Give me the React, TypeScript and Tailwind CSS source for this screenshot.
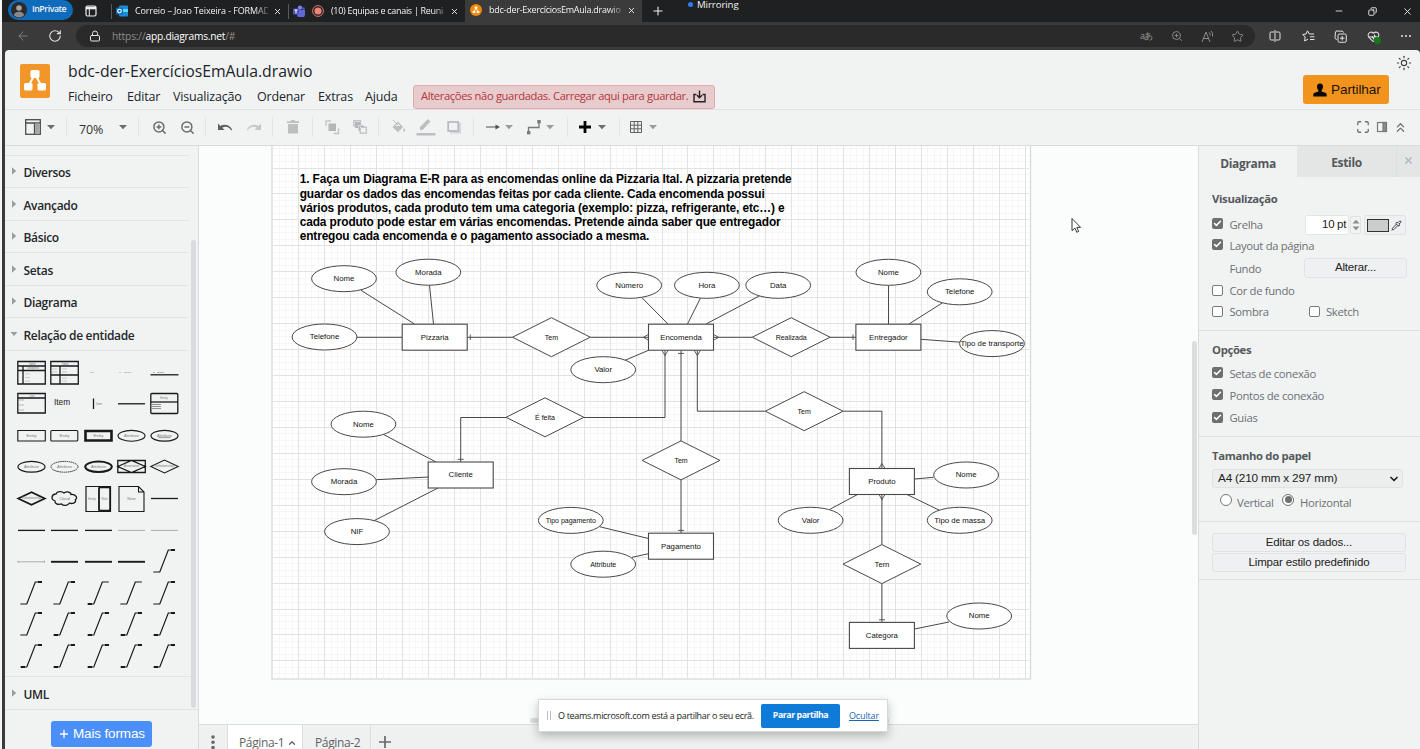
import React from "react";
import {
  X,
  Plus,
  Minus,
  ArrowLeft,
  RotateCw,
  Lock,
  ZoomIn,
  ZoomOut,
  Star,
  Sun,
  Copy,
  ChevronsUp,
  ChevronUp,
  ChevronDown,
  Pipette,
  Maximize,
  HeartPulse,
  Check,
} from "lucide-react";

const UI = "font-['Open_Sans','Noto_Sans',sans-serif]";

/* ---------- browser chrome ---------- */

function OrangeLogo({ className }: { className: string }) {
  return (
    <svg viewBox="0 0 30 34" className={className}>
      <rect width="30" height="34" rx="2" fill="#f2962a" />
      <path d="M15 10 L8.5 22 M15 10 L21.500 22" stroke="#fff" strokeWidth="2" />
      <rect x="10.500" y="6" width="9" height="8" rx="1.500" fill="#fff" />
      <rect x="4" y="19" width="8.500" height="7.500" rx="1.500" fill="#fff" />
      <rect x="17.500" y="19" width="8.500" height="7.500" rx="1.500" fill="#fff" />
    </svg>
  );
}

function TabBar() {
  return (
    <div className="flex h-[22px] items-center bg-[#1f2021] text-[9px] text-[#f2f2f2]">
      <div className="ml-[6px] flex h-[20px] w-[65px] items-center self-start rounded-full bg-[#0f6cbd]">
        <svg viewBox="0 0 16 16" className="ml-[3px] h-4 w-4">
          <circle cx="8" cy="8" r="8" fill="#2c2a2b" />
          <circle cx="8" cy="6" r="2.800" fill="#a8a4a2" />
          <path d="M3 13.500c0-5 10-5 10 0a8 8 0 0 1-10 0z" fill="#8b8886" />
        </svg>
        <span className="ml-[5px] text-[8.800px] font-semibold tracking-[-0.45px] whitespace-nowrap">InPrivate</span>
      </div>
      <svg viewBox="0 0 12 12" className="ml-[12px] h-[12px] w-[12px]" fill="none" stroke="#eee">
        <rect x="1" y="1" width="10" height="10" rx="1.500" strokeWidth="1.200" />
        <path d="M1 3h10" strokeWidth="2.600" />
        <path d="M4.300 4v7" strokeWidth="1" />
      </svg>
      <div className="ml-[14px] h-[15px] w-px bg-[#5a5a5a]" />
      <svg viewBox="0 0 12 12" className="ml-[4px] h-[12px] w-[12px]">
        <rect x="3" y="0.500" width="9" height="11" rx="1" fill="#1c8ad6" />
        <path d="M7 4h5v3H7z" fill="#50d9ff" />
        <rect x="0" y="2.500" width="7" height="7" rx="1" fill="#0f6cbd" />
        <circle cx="3.500" cy="6" r="1.800" fill="none" stroke="#fff" strokeWidth="1.100" />
      </svg>
      <span className="ml-[7px] w-[133px] tracking-[-0.13px] whitespace-nowrap [mask-image:linear-gradient(to_right,#000_90%,transparent_104%)]">
        Correio – Joao Teixeira - FORMAD
      </span>
      <X className="ml-[5px] h-[9px] w-[9px]" strokeWidth={2.4} />
      <div className="ml-[6px] h-[15px] w-px bg-[#5a5a5a]" />
      <svg viewBox="0 0 12 12" className="ml-[4px] h-[12px] w-[12px]">
        <circle cx="7" cy="2.600" r="2.200" fill="#7b83eb" />
        <circle cx="10.500" cy="3.600" r="1.300" fill="#5059c9" />
        <path d="M4 5h8v3.500a3.500 3.500 0 0 1-8 1z" fill="#6068d8" />
        <rect x="0" y="3.500" width="6" height="6" rx="0.800" fill="#4b53bc" />
        <path d="M1.500 5h3M3 5v3.500" stroke="#fff" strokeWidth="1" />
      </svg>
      <svg viewBox="0 0 12 12" className="ml-[7px] h-[12px] w-[12px]">
        <circle cx="6" cy="6" r="5.400" fill="none" stroke="#f0837a" strokeWidth="0.900" />
        <circle cx="6" cy="6" r="3.600" fill="#f0837a" />
      </svg>
      <span className="ml-[7px] w-[114px] tracking-[-0.3px] whitespace-nowrap [mask-image:linear-gradient(to_right,#000_90%,transparent_104%)]">
        (10) Equipas e canais | Reuni
      </span>
      <X className="ml-[5px] h-[9px] w-[9px]" strokeWidth={2.4} />
      <div className="ml-[6px] flex h-[22px] w-[177px] items-center bg-[#3b3b3b] pb-[2px]">
        <svg viewBox="0 0 12 12" className="ml-[5px] h-[12px] w-[12px]">
          <circle cx="6" cy="6" r="6" fill="#f08705" />
          <path d="M6 4 4 8M6 4l2 4" stroke="#fff" strokeWidth="0.800" />
          <path d="M4.700 2.600h2.600v2.200H4.700zM2.700 6.800h2.600V9H2.700zM6.700 6.800h2.600V9H6.700z" fill="#fff" />
        </svg>
        <span className="ml-[7px] w-[133px] tracking-[-0.26px] whitespace-nowrap [mask-image:linear-gradient(to_right,#000_90%,transparent_104%)]">
          bdc-der-ExercíciosEmAula.drawio
        </span>
        <X className="ml-[5px] h-[9px] w-[9px]" strokeWidth={2.4} />
      </div>
      <Plus className="ml-[9px] h-[14px] w-[14px]" strokeWidth={1.8} />
      <div className="ml-[23px] flex h-[22px] items-start">
        <span className="mt-[1.500px] h-[5px] w-[5px] rounded-full bg-[#2f7bff]" />
        <span className="ml-[4px] text-[9.700px] leading-[9px] tracking-[-0.1px] whitespace-nowrap">Mirroring</span>
      </div>
      <Minus className="ml-auto h-[10px] w-[10px]" strokeWidth={2} />
      <Copy className="ml-[24px] h-[9px] w-[9px] -scale-x-100" strokeWidth={2.4} />
      <X className="mr-[7px] ml-[25px] h-[11px] w-[11px]" strokeWidth={2} />
    </div>
  );
}

function AddressBar() {
  return (
    <div className="flex h-[28px] items-center bg-[#3a3a3a] text-[#e4e4e4]">
      <ArrowLeft className="ml-[14px] h-[14px] w-[14px] text-[#7d7d7d]" strokeWidth={1.7} />
      <RotateCw className="ml-[18px] h-[14px] w-[14px]" strokeWidth={1.9} />
      <div className="ml-[14px] flex h-[22px] w-[1179px] items-center rounded-full bg-[#2a2a2a] text-[#8e8e8e]">
        <Lock className="ml-[13px] h-[12px] w-[12px] text-[#e4e4e4]" strokeWidth={2} />
        <div className="mt-[1px] ml-[11px] text-[10.200px] whitespace-nowrap">
          <span className="tracking-[-0.15px]">https://</span>
          <span className="tracking-[-0.22px] text-white">app.diagrams.net</span>
          <span className="tracking-[-0.3px]">/#</span>
        </div>
        <span className="ml-auto text-[9px] tracking-[-0.5px] text-[#999]">aあ</span>
        <ZoomIn className="ml-[18px] h-[12px] w-[12px]" strokeWidth={1.8} />
        <svg viewBox="0 0 13 13" className="ml-[18px] h-[13px] w-[13px]" fill="none" stroke="#8e8e8e">
          <path d="M1 12 5 2l4 10M2.500 8.500h5M8 2.500q1.600 1.200 1 3M10 1q2.500 2 1.500 5.500" />
        </svg>
        <Star className="mr-[11px] ml-[17px] h-[13px] w-[13px]" strokeWidth={1.7} />
      </div>
      <svg viewBox="0 0 12 12" className="ml-[14px] h-[12px] w-[12px]" fill="none" stroke="#e4e4e4">
        <path d="M5 2H2.200a1.200 1.200 0 0 0-1.200 1.200v5.600A1.200 1.200 0 0 0 2.200 10H5M7 2h2.800A1.200 1.200 0 0 1 11 3.200v5.600A1.200 1.200 0 0 1 9.800 10H7M6 0v12" />
      </svg>
      <svg viewBox="0 0 13 12" className="ml-[21px] h-[12px] w-[13px]" fill="none" stroke="#e4e4e4" strokeLinejoin="round">
        <path d="M12 4H7.300L5.500 0.800 4 4 0.800 4.500 3.200 7l-.6 4L6 9.200M8 6.800h4.500M8 9.500h4.500" />
      </svg>
      <svg viewBox="0 0 13 13" className="ml-[19px] h-[13px] w-[13px]" fill="none" stroke="#e4e4e4">
        <rect x="4" y="4" width="8.300" height="8.300" rx="1.500" />
        <path d="M8.200 6v4.400M6 8.200h4.400M2.800 9.500A2 2 0 0 1 1 7.500L1.500 2A1.500 1.500 0 0 1 3 1l5 .2a1.500 1.500 0 0 1 1.500 1.300" />
      </svg>
      <div className="relative ml-[20px] h-[13px] w-[13px]">
        <HeartPulse className="h-[13px] w-[13px]" strokeWidth={1.9} />
        <span className="absolute right-[-1px] bottom-[-1px] h-[7px] w-[7px] rounded-full bg-[#16761a]" />
      </div>
      <svg viewBox="0 0 12 4" className="ml-[20px] h-[4px] w-[12px]" fill="#e4e4e4">
        <circle cx="2" cy="2" r="1" />
        <circle cx="6" cy="2" r="1" />
        <circle cx="10" cy="2" r="1" />
      </svg>
    </div>
  );
}

/* ---------- editor header ---------- */

function Header() {
  return (
    <div className="flex h-[60px] border-b border-[#dfe1e2]">
      <OrangeLogo className="mt-[13.500px] ml-[14.500px] h-[34px] w-[30px]" />
      <div className="ml-[18.500px] text-[#20242a]">
        <div className="mt-[10px] text-[15.800px] leading-[22px] tracking-[-0.02px] whitespace-nowrap">
          bdc-der-ExercíciosEmAula.drawio
        </div>
        <div className="mt-[2px] flex h-[25px] items-center text-[12.500px] tracking-[-0.17px] whitespace-nowrap">
          <span className="mt-[2px] w-[59px]">Ficheiro</span>
          <span className="mt-[2px] w-[46px]">Editar</span>
          <span className="mt-[2px] w-[84px]">Visualização</span>
          <span className="mt-[2px] w-[61px]">Ordenar</span>
          <span className="mt-[2px] w-[47px]">Extras</span>
          <span className="mt-[2px] w-[48px]">Ajuda</span>
          <div className="flex h-[24px] w-[302px] items-center rounded-[3px] border border-[#e0a9ad] bg-[#e8cbcc] pl-[7px] text-[11.200px] tracking-[-0.36px] text-[#b3363c]">
            <span className="w-[272px]">Alterações não guardadas. Carregar aqui para guardar.</span>
            <svg viewBox="0 0 13 13" className="h-[13px] w-[13px]" fill="none" stroke="#222" strokeWidth="1.400">
              <path d="M6.500 0.500v7M4 5.200l2.500 2.600L9 5.200M3.500 4.500H1v7.300h11V4.500H9.500" />
            </svg>
          </div>
        </div>
      </div>
      <div className="mt-[25px] mr-[7px] ml-auto flex h-[29px] w-[86px] items-center rounded-[3px] bg-[#f2931e] font-['Liberation_Sans',Arial,sans-serif] text-[13.600px] text-[#1c1408]">
        <svg viewBox="0 0 14 14" className="ml-[10px] h-[14px] w-[14px]" fill="#0a0805">
          <path d="M7 0.500c2.200 0 3 1.600 3 3.300 0 1.500-.6 2.700-1.300 3.300v1.300l3.600 1.400c1 .4 1.400 1 1.400 2V13.500H.3v-1.700c0-1 .4-1.600 1.400-2l3.600-1.400V7.100C4.600 6.500 4 5.300 4 3.800 4 2.100 4.800.5 7 .5z" />
        </svg>
        <span className="mt-[1px] ml-[4px] tracking-[-0.1px]">Partilhar</span>
      </div>
      <Sun className="mt-[5px] mr-[8px] h-[16px] w-[16px] text-[#444]" strokeWidth={1.7} />
    </div>
  );
}

function Caret({ className }: { className: string }) {
  return (
    <svg viewBox="0 0 16 16" className={"h-4 w-4 shrink-0 " + className}>
      <path d="M4 6h8l-4 4.200z" fill="currentColor" />
    </svg>
  );
}

function Sep({ className }: { className: string }) {
  return <div className={"h-[20px] w-px shrink-0 bg-[#e2e4e5] " + className} />;
}

function Toolbar() {
  return (
    <div className="flex h-[36px] items-center border-b border-[#d9dbdc] pb-[1px] text-[#6b6e70]">
      <svg viewBox="0 0 16 16" className="ml-[20px] h-4 w-4" fill="none" stroke="#4b4d4f" strokeWidth="1.300">
        <rect x="0.700" y="0.700" width="14.600" height="14.600" />
        <path d="M0.700 4h14.600M9.500 4v11" />
        <rect x="10" y="4.500" width="4.700" height="10" fill="#a3a6a8" stroke="none" />
      </svg>
      <Caret className="ml-[2px]" />
      <Sep className="ml-[7px]" />
      <span className="mt-[6px] ml-[12px] w-[36px] text-[12.500px] tracking-[-0.2px] text-[#333]">70%</span>
      <Caret className="" />
      <Sep className="ml-[7px]" />
      <ZoomIn className="ml-[13px] h-[15px] w-[15px]" strokeWidth={2.4} />
      <ZoomOut className="ml-[13px] h-[15px] w-[15px]" strokeWidth={2.4} />
      <Sep className="ml-[10px]" />
      <svg viewBox="0 0 16 16" className="ml-[11px] h-4 w-4" fill="#5c5f61">
        <path d="M1 4.500v6.500h6.500L5.300 8.800C8 7 12 7.200 14.200 11.500l1-.7C12.800 5.500 7.500 4.500 3.300 6.900z" />
      </svg>
      <svg viewBox="0 0 16 16" className="ml-[13px] h-4 w-4 -scale-x-100" fill="#c5c8ca">
        <path d="M1 4.500v6.500h6.500L5.300 8.800C8 7 12 7.200 14.200 11.500l1-.7C12.800 5.500 7.500 4.500 3.300 6.900z" />
      </svg>
      <Sep className="ml-[10px]" />
      <svg viewBox="0 0 16 16" className="ml-[12px] h-4 w-4" fill="#bcbfc1">
        <path d="M2 2.300h3.500L6.500 1h3l1 1.300H14V4H2zM3 5h10v9.500H3z" />
      </svg>
      <Sep className="ml-[11px]" />
      <svg viewBox="0 0 16 16" className="ml-[11px] h-4 w-4" fill="#b4b7b9">
        <path d="M4.500 4.500h7.500v7.500H4.500z" />
        <path d="M2 7V2h5M14.500 9.500v5h-5" fill="none" stroke="#c3c6c8" strokeWidth="1.500" />
      </svg>
      <svg viewBox="0 0 16 16" className="ml-[12px] h-4 w-4" fill="#b4b7b9">
        <path d="M3 3h6v3H6v3H3z" />
        <path d="M4 7H1.800V1.800H8.500V4M9 8.200h5.300v6H8.200V9" fill="none" stroke="#c3c6c8" strokeWidth="1.500" />
        <path d="M6.500 6.500H12V8H8v4H6.500z" />
      </svg>
      <Sep className="ml-[10px]" />
      <svg viewBox="0 0 16 16" className="ml-[11px] h-4 w-4" fill="#bcbfc1">
        <path d="M2.500 8 8 2.500l5 5.500-5 5.300z" />
        <path d="M3 1l5 5M4 7.500 8 3.700l3.500 3.800z" stroke="#bcbfc1" fill="#eef0f0" />
        <path d="M14 9c1.300 1.900 1.700 3.300.2 3.600-1.600-.2-1.200-1.800-.2-3.600z" />
      </svg>
      <svg viewBox="0 0 20 18" className="ml-[10px] h-[18px] w-[20px]" fill="#bcbfc1">
        <path d="M4 12V9l8-8 2.500 2.500-7.700 8.300zM0.500 15h19v2.500H.5z" />
      </svg>
      <svg viewBox="0 0 16 16" className="ml-[10px] h-4 w-4" fill="none">
        <rect x="4" y="4" width="11" height="10.500" fill="#d4d6d7" />
        <rect x="2.200" y="3" width="10" height="9" fill="#f1f3f3" stroke="#b9bcbe" strokeWidth="1.800" />
      </svg>
      <Sep className="ml-[11px]" />
      <svg viewBox="0 0 16 16" className="ml-[11px] h-4 w-4">
        <path d="M1 8h10" stroke="#4e5052" strokeWidth="1.200" />
        <path d="M10.500 5.500 15 8l-4.500 2.500z" fill="#4e5052" />
      </svg>
      <Caret className="text-[#9a9da0]" />
      <svg viewBox="0 0 16 16" className="ml-[9px] h-4 w-4" fill="#777a7c">
        <path d="M2.500 13.500V8.500h10.500V3" fill="none" stroke="#777a7c" strokeWidth="1.300" />
        <rect x="1" y="12" width="3.400" height="3.400" />
        <rect x="11.300" y="1" width="3.400" height="3.400" />
      </svg>
      <Caret className="text-[#9a9da0]" />
      <Sep className="ml-[9px]" />
      <svg viewBox="0 0 16 16" className="ml-[9px] h-4 w-4">
        <path d="M8 2v12M2 8h12" stroke="#000" strokeWidth="2.800" />
      </svg>
      <Caret className="ml-[1px]" />
      <Sep className="ml-[9px]" />
      <svg viewBox="0 0 16 16" className="ml-[8px] h-4 w-4" fill="none" stroke="#5f6264">
        <path d="M2.500 2.500h11v11h-11zM6.200 2.500v11M9.800 2.500v11M2.500 6.200h11M2.500 9.800h11" />
      </svg>
      <Caret className="ml-[1px] text-[#9a9da0]" />
      <Maximize className="ml-auto h-[14px] w-[14px]" strokeWidth={2.2} />
      <svg viewBox="0 0 12 12" className="ml-[6px] h-[12px] w-[12px]" fill="none" stroke="#77797b" strokeWidth="1.200">
        <rect x="1.500" y="1.500" width="9" height="9" />
        <rect x="7" y="1.500" width="3" height="9" fill="#8a8d8f" />
      </svg>
      <ChevronsUp className="mr-[12px] ml-[5px] h-[15px] w-[15px]" strokeWidth={2} />
    </div>
  );
}

/* ---------- shapes sidebar ---------- */

function SidebarRow({ label, open }: { label: string; open?: boolean }) {
  return (
    <div className="flex h-[32.5px] shrink-0 items-center border-b border-[#e1e4e4] pt-[4px] text-[12px] font-semibold tracking-[-0.33px] text-[#23262a]">
      <svg viewBox="0 0 8 8" className="mb-[4px] ml-[5px] h-[8px] w-[8px]" fill="#9a9d9e">
        {open ? <path d="M0.500 2h7L4 6z" /> : <path d="M2 0.300v7.400L6.200 4z" />}
      </svg>
      <span className="ml-[5.500px] whitespace-nowrap">{label}</span>
    </div>
  );
}

function Tiny({ x, y, children, size = 3 }: { x: number; y: number; children: string; size?: number }) {
  return (
    <text x={x} y={y} fontSize={size} fill="#777" stroke="none" textAnchor="middle" fontFamily="Liberation Sans, sans-serif">
      {children}
    </text>
  );
}

const S = "#17191a";
const connector = (a: boolean, b: boolean) => (
  <g>
    <path d="M5.300 27h6.500l8.500-22h6.500" stroke={S} strokeWidth="1.200" />
    {a && <path d="M6 27h4" stroke={S} strokeWidth="2" />}
    {b && <path d="M23 5h4" stroke={S} strokeWidth="2" />}
  </g>
);

const palette: React.ReactNode[] = [
  <g>
    <path d="M2.800 4.500h27.500v22.500H2.800zM2.800 9h27.500M2.800 13.500h27.500M8 9v18" />
    <Tiny x={17} y={8}>Table</Tiny>
    <Tiny x={18} y={12.5}>uniqueId</Tiny>
    <path d="M10 17h5M10 20.500h5M10 24h5" stroke="#aaa" strokeWidth="0.600" />
  </g>,
  <g>
    <path d="M2.800 4.500h27.500v22.500H2.800zM2.800 9h27.500M2.800 18h27.500M12 9v18" />
    <Tiny x={17} y={8}>Table</Tiny>
    <path d="M4 12h5M4 15h5M14 12h5M14 15h5M14 21h5M14 24h5" stroke="#aaa" strokeWidth="0.600" />
  </g>,
  <path d="M8 15.500h4" stroke="#b5b5b5" strokeWidth="0.700" />,
  <path d="M4 15.500h2M9 15.500h7" stroke="#b5b5b5" strokeWidth="0.700" />,
  <g>
    <path d="M5 15.500h2M9 15.500h7" stroke="#999" strokeWidth="0.700" />
    <path d="M2.500 17.800h28" />
  </g>,
  <g>
    <path d="M2.800 5.500h27.500v19.500H2.800zM2.800 10h27.500" />
    <Tiny x={17} y={9}>List</Tiny>
    <path d="M4 12h5M4 17h5M4 22h5" stroke="#999" strokeWidth="0.700" />
  </g>,
  <text x="6" y="17" fontSize="8.300" fill="#222" stroke="none" fontFamily="Liberation Sans, sans-serif">Item</text>,
  <g>
    <path d="M11.500 10.500v10.500" />
    <Tiny x={17} y={17}>Item</Tiny>
  </g>,
  <path d="M3 15.800h27" />,
  <g>
    <rect x="2.800" y="5.500" width="27" height="20" rx="1" />
    <path d="M2.800 14h27" />
    <Tiny x={16} y={11}>Entity</Tiny>
    <path d="M4 16.500h9M4 18.500h9M4 20.500h9" stroke="#777" strokeWidth="0.800" />
  </g>,
  <g><path d="M2.800 10.500h27.500v10.500H2.800z" strokeWidth="1.100" /><Tiny x={16.5} y={17} size={4}>Entity</Tiny></g>,
  <g><rect x="2.800" y="10.500" width="27" height="10.500" rx="1" strokeWidth="1.100" /><Tiny x={16.5} y={17} size={4}>Entity</Tiny></g>,
  <g><path d="M3.500 11h26v9.500h-26z" strokeWidth="2.600" /><Tiny x={16.5} y={17} size={4}>Entity</Tiny></g>,
  <g><ellipse cx="16.500" cy="15.800" rx="13.500" ry="5.400" strokeWidth="1.100" /><Tiny x={16.5} y={17} size={4}>Attribute</Tiny></g>,
  <g><ellipse cx="16.500" cy="15.800" rx="13.500" ry="5.400" strokeWidth="1.200" /><Tiny x={16.5} y={17} size={4}>Attribute</Tiny><path d="M10.500 17.600h12" strokeWidth="0.400" /></g>,
  <g><ellipse cx="16.500" cy="15.800" rx="13.500" ry="5.400" strokeWidth="1.200" /><Tiny x={16.5} y={17} size={4}>Attribute</Tiny></g>,
  <g><ellipse cx="16.500" cy="15.800" rx="13.500" ry="5.400" strokeWidth="0.900" strokeDasharray="1.500 0.600" /><Tiny x={16.5} y={17} size={4}>Attribute</Tiny></g>,
  <g><ellipse cx="16.500" cy="15.800" rx="13.300" ry="5.200" strokeWidth="2" /><Tiny x={16.5} y={17} size={4}>Attribute</Tiny></g>,
  <g><path d="M2.800 9.500h27.500v12H2.800zM2.800 15.500l13.700-6 13.700 6-13.700 6z" /><Tiny x={16.5} y={16.500} size={3}>Associative</Tiny></g>,
  <g><path d="M2.800 15.500l13.700-6.500 13.700 6.500-13.700 6.500z" strokeWidth="1.100" /><Tiny x={16.5} y={16.500} size={3.5}>Relationship</Tiny></g>,
  <g><path d="M3.200 15.500l13.300-6.200 13.300 6.200-13.300 6.200z" strokeWidth="1.700" /><Tiny x={16.5} y={16.500} size={3.5}>Relationship</Tiny></g>,
  <g><path d="M8 11c1-3 6-3 8-1 3-2 7-1 7 1.500 5-.5 7 4 4.500 5 1 4-4 4.500-6 3.500-2 3-6 3-8 1-4 1-7-.5-6.500-3C2 16 4 11 8 11z" strokeWidth="1.300" /><Tiny x={16.5} y={17} size={4}>Cloud</Tiny></g>,
  <g><path d="M4 3.500h24.500v25H4zM17 3.500v25" strokeWidth="1.200" /><rect x="17" y="4.500" width="11" height="23" rx="1.500" strokeWidth="1.500" /><Tiny x={10} y={17} size={3}>Entity</Tiny><Tiny x={22.500} y={17} size={3}>Role</Tiny></g>,
  <g><path d="M4 3.500h19.500l5.500 5.500v19.500H4zM23.500 3.500V9H29" strokeWidth="1.100" /><Tiny x={16.5} y={17} size={4}>Note</Tiny></g>,
  <path d="M3 15.500h27" />,
  <path d="M3 16.400h27" />,
  <path d="M3 16.400h27" />,
  <path d="M3 16.400h27" />,
  <path d="M3 16.400h27" stroke="#a3a5a6" strokeWidth="0.900" />,
  <path d="M3 16.400h27" stroke="#a3a5a6" strokeWidth="0.900" />,
  <g stroke="#a3a5a6" strokeWidth="0.900"><path d="M3 16.800h27" /><path d="M3 15.800v2M29.500 15.800v2" /></g>,
  <path d="M3 16.800h27" strokeWidth="1.900" />,
  <path d="M3 16.800h27" strokeWidth="1.900" />,
  <path d="M3 16.800h27" strokeWidth="1.900" />,
  connector(false, true),
  connector(false, true), connector(false, true), connector(true, false), connector(false, false), connector(false, true),
  connector(false, true), connector(true, true), connector(true, true), connector(true, true), connector(true, true),
  connector(true, true), connector(true, true), connector(true, true), connector(true, true), connector(true, true),
];

function Sidebar() {
  return (
    <div className="relative flex w-[194px] flex-col border-r border-[#d9dcdc] bg-[#f1f3f3]">
      <div className="w-[184px]">
        <div className="h-[9.5px] border-b border-[#e1e4e4]" />
        {["Diversos", "Avançado", "Básico", "Setas", "Diagrama"].map((l) => (
          <SidebarRow key={l} label={l} />
        ))}
        <SidebarRow label="Relação de entidade" open />
      </div>
      <div className="grid h-[326.500px] w-[186px] shrink-0 grid-cols-[repeat(5,33.300px)] content-start border-b border-[#e1e4e4] pt-[6.500px] pl-[10px]">
        {palette.map((p, i) => (
          <svg key={i} viewBox="0 0 33.300 31.400" className="h-[31.400px] w-[33.300px]" fill="none" stroke={S} strokeWidth="1.300">
            {p}
          </svg>
        ))}
      </div>
      <SidebarRow label="UML" />
      <div className="mt-[11.500px] ml-[46px] flex h-[26px] w-[101px] shrink-0 items-center rounded-[3px] bg-[#4b8ff8] pl-[7px] font-['Liberation_Sans',Arial,sans-serif] text-[13.500px] tracking-[-0.15px] text-white">
        <Plus className="mr-[3px] h-[12px] w-[12px]" strokeWidth={2.6} />
        <span className="whitespace-nowrap">Mais formas</span>
      </div>
      <div className="absolute top-[94px] left-[186px] h-[468px] w-[5px] rounded-full bg-[#d9dcdc]" />
    </div>
  );
}

/* ---------- diagram ---------- */

type Node = { k: "e" | "r" | "d"; x: number; y: number; t: string; s?: number };

const nodes: Node[] = [
  { k: "e", x: 344, y: 278.7, t: "Nome" },
  { k: "e", x: 428.3, y: 272.2, t: "Morada" },
  { k: "e", x: 324.5, y: 337, t: "Telefone" },
  { k: "r", x: 434.7, y: 337.2, t: "Pizzaria" },
  { k: "d", x: 551.4, y: 337.2, t: "Tem", s: 7 },
  { k: "e", x: 629.2, y: 285.3, t: "Número" },
  { k: "e", x: 706.9, y: 285.3, t: "Hora" },
  { k: "e", x: 778.2, y: 285.3, t: "Data" },
  { k: "r", x: 681, y: 337.2, t: "Encomenda" },
  { k: "e", x: 603.2, y: 369.7, t: "Valor" },
  { k: "d", x: 791.2, y: 337.2, t: "Realizada", s: 7 },
  { k: "e", x: 888.4, y: 272.3, t: "Nome" },
  { k: "e", x: 959.7, y: 291.8, t: "Telefone" },
  { k: "r", x: 888.4, y: 337.2, t: "Entregador" },
  { k: "e", x: 992, y: 343.6, t: "Tipo de transporte" },
  { k: "d", x: 545, y: 417.3, t: "É feita", s: 7 },
  { k: "d", x: 804.2, y: 411.2, t: "Tem", s: 7 },
  { k: "e", x: 363.4, y: 424.2, t: "Nome" },
  { k: "r", x: 460.7, y: 475, t: "Cliente" },
  { k: "e", x: 344, y: 481.7, t: "Morada" },
  { k: "e", x: 357, y: 531.6, t: "NIF" },
  { k: "d", x: 681, y: 460.4, t: "Tem", s: 7 },
  { k: "r", x: 681, y: 546.2, t: "Pagamento" },
  { k: "e", x: 570.8, y: 520.4, t: "Tipo pagamento", s: 7 },
  { k: "e", x: 603.2, y: 564.2, t: "Attribute", s: 7 },
  { k: "r", x: 881.9, y: 481.5, t: "Produto" },
  { k: "e", x: 966.1, y: 475, t: "Nome" },
  { k: "e", x: 810.6, y: 520.3, t: "Valor" },
  { k: "e", x: 959.7, y: 520.3, t: "Tipo de massa" },
  { k: "d", x: 881.9, y: 564.1, t: "Tem" },
  { k: "r", x: 881.9, y: 635.4, t: "Categora" },
  { k: "e", x: 979.2, y: 616, t: "Nome" },
];

const links = [
  "M361 290.300 414.500 324M429.500 285.200 433.500 324M357 337.300H402",
  "M467.300 337.300H512.500M590.300 337.300H648.500M713.500 337.300H752.300M830 337.300H856",
  "M641.500 297.300 668 324M700.500 298 687.500 324M759.500 295.800 706 324M625 360.300 648.500 350.300",
  "M888.500 285.300V324M942.500 302.800 909 324M921 339.300 960 342.200",
  "M460.700 462V417.500H506.200M583.800 417.500H665V350.500M681 350.500V441M681 480V533",
  "M697.300 350.500V411.200H765.300M843.200 411.200H881.900V468.500",
  "M383.500 434.500 436 462M376.300 479.700 428.500 477M374 520.700 438 488",
  "M599.500 526.700 648.500 538.500M632 557.300 648.500 553.700",
  "M914.500 479 933.500 477.300M907 494.500 939.500 510.300M857.500 494.500 829.500 509.500",
  "M881.900 494.500V544.500M881.900 583.700V622.500M914.500 629 949 622",
];

const marks = [
  "M470.300 334.500v5.500M853 334.500v5.500M678 353.400h6M678 530.400h6M457.700 459.300h6M879 619.800h6",
  "M648.500 334.300 643.500 337.300 648.500 340.300M713.500 334.300 718.500 337.300 713.500 340.300",
  "M662 350.500 665 355.500 668 350.500M694.300 350.500 697.300 355.500 700.300 350.500",
  "M879 468.500 881.900 463.500 885 468.500M879 494.500 881.900 499.500 885 494.500",
];

const statement: [string, number][] = [
  ["1. Faça um Diagrama E-R para as encomendas online da Pizzaria Ital. A pizzaria pretende", 492],
  ["guardar os dados das encomendas feitas por cada cliente. Cada encomenda possui", 465],
  ["vários produtos, cada produto tem uma categoria (exemplo: pizza, refrigerante, etc…) e", 485],
  ["cada produto pode estar em várias encomendas. Pretende ainda saber que entregador", 481],
  ["entregou cada encomenda e o pagamento associado a mesma.", 349.5],
];

const PAGE = { left: 272.4, top: 142.6, right: 1029, bottom: 678, cell: 25.94 };

function gridPath(major: boolean) {
  const step = PAGE.cell / 4;
  let d = "";
  for (let i = 1; PAGE.left + i * step < PAGE.right; i++) {
    if ((i % 4 === 0) === major) d += `M${Math.round(PAGE.left + i * step) + 0.5} 146V${PAGE.bottom}`;
  }
  for (let i = 1; PAGE.top + i * step < PAGE.bottom; i++) {
    if ((i % 4 === 0) === major) d += `M273 ${Math.round(PAGE.top + i * step) - 0.5}H${PAGE.right}`;
  }
  return d;
}

function Diagram() {
  return (
    <svg viewBox="199 146 993 570" className="h-[570px] w-[993px] shrink-0" fontFamily="Liberation Sans, Arial, sans-serif">
      <rect x="272" y="140" width="758.500" height="539" fill="#fff" stroke="#d8dada" strokeWidth="1.300" />
      <path d={gridPath(false)} stroke="#f5f6f6" strokeWidth="1" />
      <path d={gridPath(true)} stroke="#e1e3e3" strokeWidth="1" />
      {statement.map(([line, w], i) => (
        <text key={i} x={299.7} y={183.4 + i * 14.1} fontSize="11.900" fontWeight="bold" fill="#000" textLength={w}>
          {line}
        </text>
      ))}
      <g fill="none" stroke="#484848" strokeWidth="1">
        {links.map((d) => (
          <path key={d} d={d} />
        ))}
        {marks.map((d) => (
          <path key={d} d={d} strokeWidth="0.900" />
        ))}
      </g>
      {nodes.map((n, i) => (
        <g key={i}>
          <g fill="#fff" stroke="#484848" strokeWidth="1">
            {n.k === "e" && <ellipse cx={n.x} cy={n.y} rx="32.400" ry="13" />}
            {n.k === "r" && <rect x={n.x - 32.5} y={n.y - 13} width="65" height="26" strokeWidth="1.100" />}
            {n.k === "d" && <path d={`M${n.x - 38.9} ${n.y}l38.900-19.500 38.900 19.500-38.900 19.500z`} />}
          </g>
          <text x={n.x} y={n.y + 2.4} fontSize={n.s ?? 7.8} fill="#111" textAnchor="middle">
            {n.t}
          </text>
        </g>
      ))}
      <path
        d="M1072 218.500v12.200l2.900-2.600 1.900 4.200 1.900-.9-1.900-4h3.800z"
        fill="#fff"
        stroke="#222"
        strokeWidth="0.900"
      />
    </svg>
  );
}

function Canvas() {
  return (
    <div className="relative flex min-w-0 flex-1 flex-col bg-[#fbfcfc]">
      <div className="flex h-[571px] shrink-0">
        <Diagram />
        <div className="mt-[195px] h-[194px] w-[5px] rounded-full bg-[#dcdede]" />
      </div>
      <div className="h-[7px] shrink-0">
        <div className="mt-[1px] ml-[331px] h-[5px] w-[359px] rounded-full bg-[#dcdede]" />
      </div>
      <div className="flex h-[34px] shrink-0 items-stretch border-t border-[#dcdede] bg-[#eff1f1] text-[12px] tracking-[-0.38px] text-[#5f6265]">
        <svg viewBox="0 0 28 24" className="h-[24px] w-[28px]" fill="#66696b">
          <circle cx="14" cy="12" r="1.800" />
          <circle cx="14" cy="17.300" r="1.800" />
          <circle cx="14" cy="22.600" r="1.800" />
        </svg>
        <div className="flex w-[76px] items-center border-x border-[#dcdede] bg-white pt-[2px] pl-[11px]">
          <span className="w-[48px] whitespace-nowrap">Página-1</span>
          <ChevronUp className="h-[10px] w-[10px]" strokeWidth={3} />
        </div>
        <div className="flex w-[68px] items-center border-r border-[#dcdede] pt-[2px] pl-[12px] whitespace-nowrap">Página-2</div>
        <svg viewBox="0 0 14 14" className="mt-[10px] ml-[7px] h-[14px] w-[14px]" stroke="#66696b" strokeWidth="1.700">
          <path d="M7 1v12M1 7h12" />
        </svg>
      </div>
      <div className="absolute top-[553px] left-[339px] flex h-[33px] w-[350px] items-center border border-[#d5d7d8] bg-white text-[9px] text-[#222] shadow-[0_4px_9px_rgba(0,0,0,0.25)]">
        <div className="ml-[8px] h-[9px] w-[4px] border-x border-[#b9bbbc]" />
        <span className="ml-[7px] w-[203px] tracking-[-0.31px] whitespace-nowrap">O teams.microsoft.com está a partilhar o seu ecrã.</span>
        <div className="flex h-[24px] w-[79px] items-center justify-center rounded-[2px] bg-[#0f7bd8] text-[8.800px] font-bold tracking-[-0.45px] whitespace-nowrap text-white">
          Parar partilha
        </div>
        <span className="ml-[9px] tracking-[-0.15px] text-[#1567b8] underline">Ocultar</span>
      </div>
    </div>
  );
}

/* ---------- format panel ---------- */

function Box({ on }: { on?: boolean }) {
  return on ? (
    <span className="mr-[6.500px] mb-[3px] flex h-[11px] w-[11px] items-center justify-center rounded-[2px] bg-[#6d6f71] text-white">
      <Check className="h-[9px] w-[9px]" strokeWidth={4} />
    </span>
  ) : (
    <span className="mr-[6.500px] mb-[3px] h-[11px] w-[11px] rounded-[2px] border border-[#77797b] bg-white" />
  );
}

function FormatPanel() {
  const btn =
    "flex items-center justify-center rounded-[3px] border border-[#e0e2e3] bg-[#eff0f1] font-['Liberation_Sans',Arial,sans-serif] text-[11.500px] tracking-[-0.18px] text-[#222]";
  return (
    <div className="w-[222px] shrink-0 border-l border-[#d9dbdc] bg-[#f1f3f3] text-[11.300px] tracking-[-0.34px] whitespace-nowrap text-[#6c7073]">
      <div className="flex h-[31px] text-[12px] font-bold text-[#55595c]">
        <div className="flex w-[98px] items-center justify-center pt-[4px]">Diagrama</div>
        <div className="flex w-[99px] items-center justify-center bg-[#e4e5e5] pt-[2px]">Estilo</div>
        <div className="flex w-[24px] items-center justify-center border-l border-[#dcdedf] bg-[#e4e5e5] text-[#a4bbd0]">
          <X className="mb-[3px] h-[11px] w-[11px]" strokeWidth={3.2} />
        </div>
      </div>

      <div className="h-[154px] border-b border-[#dcdfe0] pl-[13px]">
        <div className="flex h-[37px] items-end pb-[6px] font-bold text-[#55595c]">Visualização</div>
        <div className="flex h-[22px] items-center">
          <Box on />
          <span className="w-[75.500px]">Grelha</span>
          <div className="flex h-[20px] w-[44px] items-center justify-end rounded-[2px] border border-[#e3e5e5] bg-white pr-[2px] font-['Liberation_Sans',Arial,sans-serif] text-[11.500px] text-[#222]">
            10 pt
          </div>
          <div className="ml-[1px] flex h-[18px] w-[11px] flex-col items-center justify-between rounded-[2px] border border-[#dfe1e2] py-[2px]">
            <svg viewBox="0 0 8 5" className="h-[5px] w-[8px]"><path d="M0.500 4.500h7L4 .8z" fill="#8a8c8e" /></svg>
            <svg viewBox="0 0 8 5" className="h-[5px] w-[8px]"><path d="M0.500 .5h7L4 4.200z" fill="#8a8c8e" /></svg>
          </div>
          <div className="ml-[3px] flex h-[20px] w-[42px] items-center rounded-[2px] border border-[#e0e2e3] bg-[#eff0f1] pl-[2px]">
            <div className="h-[13px] w-[22px] border border-[#333] bg-[#cbcdcd]" />
            <Pipette className="ml-[2px] h-[11px] w-[11px] text-[#333]" strokeWidth={2} />
          </div>
        </div>
        <div className="flex h-[20px] items-center">
          <Box on />
          Layout da página
        </div>
        <div className="flex h-[23px] items-center pl-[17.500px]">
          <span className="mt-[3px] w-[74.500px]">Fundo</span>
          <div className={btn + " h-[20px] w-[103px]"}>Alterar...</div>
        </div>
        <div className="flex h-[23px] items-center pt-[2px]">
          <Box />
          Cor de fundo
        </div>
        <div className="flex h-[21px] items-center">
          <Box />
          <span className="w-[79px]">Sombra</span>
          <Box />
          Sketch
        </div>
      </div>

      <div className="h-[106px] border-b border-[#dcdfe0] pl-[13px]">
        <div className="flex h-[32px] items-center pt-[7px] font-bold text-[#55595c]">Opções</div>
        {["Setas de conexão", "Pontos de conexão", "Guias"].map((l) => (
          <div key={l} className="flex h-[22.300px] items-center">
            <Box on />
            {l}
          </div>
        ))}
      </div>

      <div className="h-[85px] border-b border-[#dcdfe0] pl-[13px]">
        <div className="flex h-[32px] items-center pt-[6px] font-bold text-[#55595c]">Tamanho do papel</div>
        <div className="flex h-[19px] w-[191px] items-center justify-between rounded-[3px] border border-[#e0e2e3] bg-[#eceeee] pr-[2px] pl-[5px] font-['Liberation_Sans',Arial,sans-serif] text-[11.800px] tracking-[-0.2px] text-[#222]">
          A4 (210 mm x 297 mm)
          <ChevronDown className="h-[12px] w-[12px]" strokeWidth={3.4} />
        </div>
        <div className="flex h-[26px] items-center pl-[8px]">
          <span className="mb-[3px] h-[12px] w-[12px] rounded-full border border-[#77797b] bg-white" />
          <span className="mt-[5px] ml-[5px] w-[45px]">Vertical</span>
          <span className="mb-[3px] flex h-[12px] w-[12px] items-center justify-center rounded-full border border-[#6d6f71] bg-white">
            <span className="h-[7px] w-[7px] rounded-full bg-[#6d6f71]" />
          </span>
          <span className="mt-[5px] ml-[6px]">Horizontal</span>
        </div>
      </div>

      <div className="flex h-[58px] flex-col gap-[1px] border-b border-[#dcdfe0] pt-[11px] pl-[13px]">
        <div className={btn + " h-[19px] w-[194px]"}>Editar os dados...</div>
        <div className={btn + " h-[19px] w-[194px]"}>Limpar estilo predefinido</div>
      </div>
    </div>
  );
}

export default function App() {
  return (
    <div className={"flex h-[749px] w-[1420px] flex-col overflow-hidden border-l-2 border-[#f4f4f4] bg-[#3a3a3a] " + UI}>
      <TabBar />
      <AddressBar />
      <div className="ml-[3px] flex min-h-0 flex-1 flex-col overflow-hidden rounded-t-[4px] bg-[#f1f3f3]">
        <Header />
        <Toolbar />
        <div className="flex min-h-0 flex-1">
          <Sidebar />
          <Canvas />
          <FormatPanel />
        </div>
      </div>
    </div>
  );
}
